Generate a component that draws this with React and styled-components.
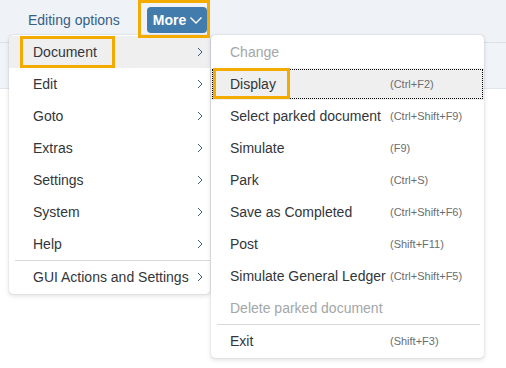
import styled, { createGlobalStyle } from "styled-components";

const Global = createGlobalStyle`
  html, body { margin: 0; padding: 0; }
  body {
    width: 506px;
    height: 368px;
    overflow: hidden;
    background: #ffffff;
    font-family: "Liberation Sans", Arial, sans-serif;
  }
`;

const Page = styled.div`
  position: relative;
  width: 506px;
  height: 368px;
  background: #ffffff;
`;

const Toolbar = styled.div`
  height: 43px;
  box-sizing: border-box;
  display: flex;
  align-items: center;
  gap: 27px;
  padding: 0 0 2px 28px;
  background: #eff2f6;
  border-bottom: 1px solid #d8e0e8;
`;

const TextButton = styled.span`
  font-size: 14px;
  color: #346187;
`;

const MoreButton = styled.button`
  display: flex;
  align-items: center;
  gap: 3px;
  height: 26px;
  padding: 0 4px 0 6px;
  border: none;
  border-radius: 4px;
  background: #427cac;
  color: #ffffff;
  font-family: inherit;
  font-size: 14px;
  font-weight: bold;
`;

const HeaderBand = styled.div`
  height: 45px;
  background: #f0f4f8;
  border-bottom: 1px solid #dfe5eb;
`;

const Menu = styled.div`
  position: absolute;
  top: ${(p) => p.$top}px;
  left: ${(p) => p.$left}px;
  width: ${(p) => p.$width}px;
  padding: 1px 0;
  background: #ffffff;
  border-radius: 4px;
  box-shadow: 0 0 1px rgba(0, 0, 0, 0.35), 0 2px 5px rgba(0, 0, 0, 0.12);
  display: flex;
  flex-direction: column;
`;

const Item = styled.div`
  height: 32px;
  box-sizing: border-box;
  display: flex;
  align-items: center;
  padding-left: ${(p) => p.$indent}px;
  padding-right: 6px;
  font-size: 14px;
  color: ${(p) => (p.$disabled ? "#a4a6a8" : "#32363a")};
  background: ${(p) => (p.$active ? "#efefef" : "transparent")};
  outline: ${(p) => (p.$focus ? "1px dotted #000" : "none")};
  outline-offset: -2px;
`;

const Label = styled.span`
  flex: 1;
  white-space: nowrap;
`;

const Shortcut = styled.span`
  width: 88px;
  font-size: 11px;
  color: #6a6d70;
  white-space: nowrap;
`;

const Separator = styled.div`
  height: 1px;
  margin-left: 6px;
  margin-right: ${(p) => p.$right}px;
  background: #d9d9d9;
`;

const Highlight = styled.div`
  position: absolute;
  top: ${(p) => p.$top}px;
  left: ${(p) => p.$left}px;
  width: ${(p) => p.$width}px;
  height: ${(p) => p.$height}px;
  box-sizing: border-box;
  border: 3px solid #f4ab00;
  pointer-events: none;
`;

const Chevron = () => (
  <svg width="8" height="10" viewBox="0 0 8 10">
    <path d="M2 1 L6 5 L2 9" fill="none" stroke="#3b5a7c" strokeWidth="1" />
  </svg>
);

const ChevronDown = () => (
  <svg width="14" height="10" viewBox="0 0 14 10">
    <path d="M1.5 2.5 L7 8 L12.5 2.5" fill="none" stroke="#ffffff" strokeWidth="1.4" />
  </svg>
);

const mainItems = [
  "Document",
  "Edit",
  "Goto",
  "Extras",
  "Settings",
  "System",
  "Help",
];

const subItems = [
  { label: "Change", disabled: true },
  { label: "Display", key: "(Ctrl+F2)", active: true },
  { label: "Select parked document", key: "(Ctrl+Shift+F9)" },
  { label: "Simulate", key: "(F9)" },
  { label: "Park", key: "(Ctrl+S)" },
  { label: "Save as Completed", key: "(Ctrl+Shift+F6)" },
  { label: "Post", key: "(Shift+F11)" },
  { label: "Simulate General Ledger", key: "(Ctrl+Shift+F5)" },
  { label: "Delete parked document", disabled: true },
];

export default function App() {
  return (
    <Page>
      <Global />
      <Toolbar>
        <TextButton>Editing options</TextButton>
        <MoreButton>
          More
          <ChevronDown />
        </MoreButton>
      </Toolbar>
      <HeaderBand />

      <Menu $top={35} $left={9} $width={201}>
        {mainItems.map((m, i) => (
          <Item key={m} $indent={24} $active={i === 0}>
            <Label>{m}</Label>
            <Chevron />
          </Item>
        ))}
        <Separator $right={0} />
        <Item $indent={24}>
          <Label>GUI Actions and Settings</Label>
          <Chevron />
        </Item>
      </Menu>

      <Menu $top={35} $left={211} $width={273}>
        {subItems.map((s) => (
          <Item
            key={s.label}
            $indent={19}
            $disabled={s.disabled}
            $active={s.active}
            $focus={s.active}
          >
            <Label>{s.label}</Label>
            {s.key && <Shortcut>{s.key}</Shortcut>}
          </Item>
        ))}
        <Separator $right={4} />
        <Item $indent={19}>
          <Label>Exit</Label>
          <Shortcut>(Shift+F3)</Shortcut>
        </Item>
      </Menu>

      <Highlight $top={0} $left={138} $width={72} $height={38} />
      <Highlight $top={36} $left={20} $width={95} $height={32} />
      <Highlight $top={68} $left={213} $width={77} $height={31} />
    </Page>
  );
}
